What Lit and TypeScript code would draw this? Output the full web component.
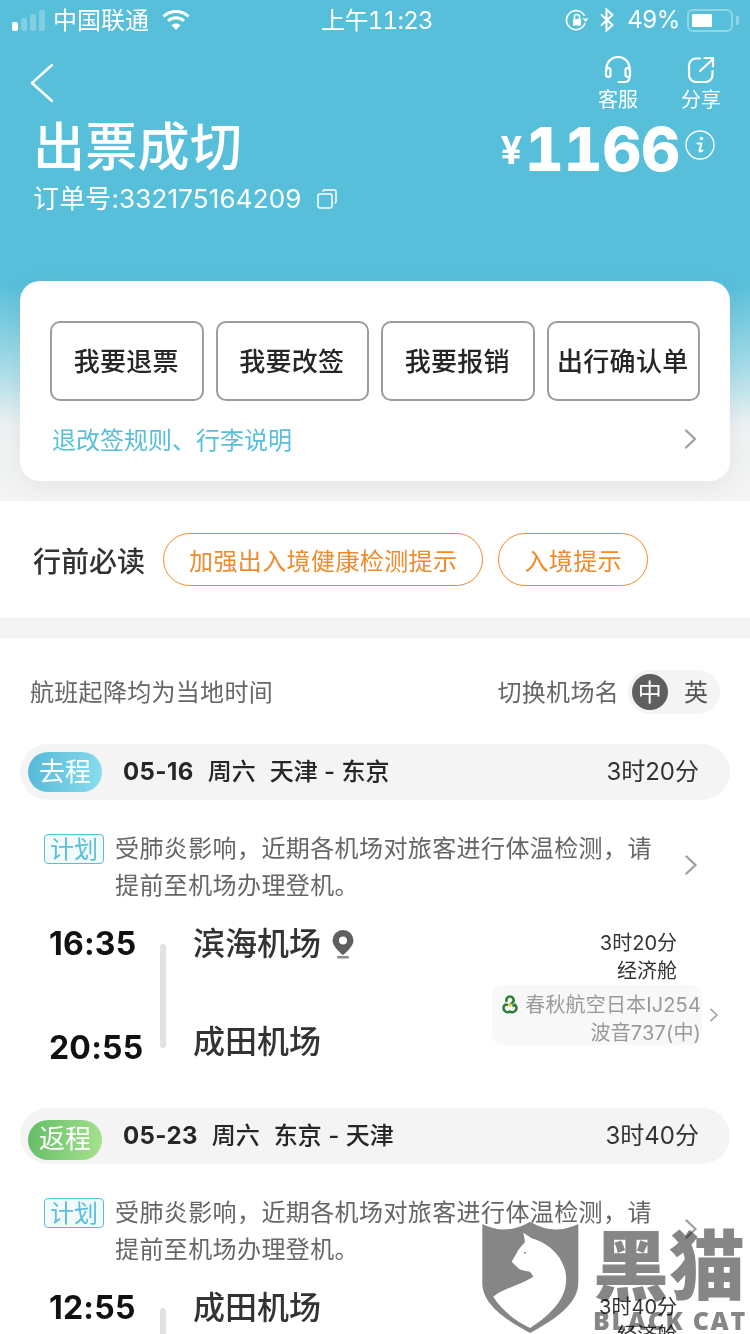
import { LitElement, css, html, svg } from 'lit';
import { customElement } from 'lit/decorators.js';

type Leg = {
  tag: string;
  tone: string;
  date: string;
  week: string;
  route: string;
  duration: string;
  depart: string;
  arrive: string;
  from: string;
  to: string;
  pin: boolean;
};

const LEGS: Leg[] = [
  {
    tag: '去程',
    tone: 'out',
    date: '05-16',
    week: '周六',
    route: '天津 - 东京',
    duration: '3时20分',
    depart: '16:35',
    arrive: '20:55',
    from: '滨海机场',
    to: '成田机场',
    pin: true,
  },
  {
    tag: '返程',
    tone: 'back',
    date: '05-23',
    week: '周六',
    route: '东京 - 天津',
    duration: '3时40分',
    depart: '12:55',
    arrive: '16:35',
    from: '成田机场',
    to: '滨海机场',
    pin: false,
  },
];

const chevron = (w: number, h: number, color: string) => html`<svg
  width=${w}
  height=${h}
  viewBox="0 0 12 20"
  fill="none"
  stroke=${color}
  stroke-width="2.4"
  stroke-linecap="round"
  stroke-linejoin="round"
>
  <path d="M1.5 1.5 10.5 10 1.5 18.5" />
</svg>`;

const airlineLogo = svg`<svg class="logo" width="20" height="20" viewBox="0 0 20 20" fill="none" stroke="#2c7f38" stroke-width="2.600">
  <path d="M6.800 7.800A3.600 3.600 0 1 1 13.200 7.800L11 10" />
  <path d="M10.500 17.200A3.700 3.700 0 1 1 5 10.800H8" />
  <path d="M9.500 17.200A3.700 3.700 0 1 0 15 10.800L12.500 12" />
  <path d="M7.500 10.500 10 9l2.500 1.500L10 13z" fill="#d9c632" stroke="none" />
</svg>`;

@customElement('app-root')
export class AppRoot extends LitElement {
  static styles = css`
    :host {
      display: block;
      position: relative;
      width: 750px;
      height: 1334px;
      overflow: hidden;
      background: #fff;
      color: #333;
      font-family: Inter, 'Noto Sans CJK SC', sans-serif;
    }

    .hero {
      height: 501px;
      box-sizing: border-box;
      background: linear-gradient(#58bfda 0, #58bfda 285px, #a9dde9 370px, #eef1f2 425px, #f4f4f4 501px);
      color: #fff;
    }

    .status {
      display: grid;
      grid-template-columns: 1fr auto 1fr;
      align-items: center;
      height: 36px;
      padding: 0 11px 0 12px;
      font-size: 24px;
    }

    .status svg,
    .battery,
    .nub,
    .signal {
      margin-top: 4px;
    }

    .status-left,
    .status-right {
      display: flex;
      align-items: center;
    }

    .status-right {
      justify-content: flex-end;
    }

    .clock {
      padding: 1px 0 0 3px;
      font-variant-numeric: tabular-nums;
      letter-spacing: -0.7px;
    }

    .percent {
      padding-top: 3px;
      letter-spacing: -0.4px;
    }

    .signal {
      display: flex;
      align-items: flex-end;
      gap: 3px;
      height: 22px;
      margin-right: 8px;
    }

    .signal i {
      width: 6px;
      border-radius: 2px;
      background: rgba(255, 255, 255, 0.25);
    }

    .signal i:first-child {
      background: #fff;
    }

    .wifi {
      margin-left: 13px;
    }

    .bt {
      margin: 4px 13px 0 11px;
    }

    .battery {
      display: flex;
      width: 46px;
      height: 23px;
      box-sizing: border-box;
      margin-left: 7px;
      padding: 3px;
      border: 2px solid rgba(255, 255, 255, 0.35);
      border-radius: 6px;
    }

    .battery b {
      width: 20px;
      background: #fff;
      border-radius: 1px;
    }

    .nub {
      width: 3px;
      height: 9px;
      margin-left: 3px;
      background: rgba(255, 255, 255, 0.35);
      border-radius: 0 2px 2px 0;
    }

    .nav {
      display: flex;
      justify-content: space-between;
      height: 82px;
      box-sizing: border-box;
      padding: 20px 29px 0 30px;
    }

    .back {
      margin-top: 7px;
    }

    .actions {
      display: flex;
      gap: 43px;
    }

    .action {
      display: flex;
      flex-direction: column;
      align-items: center;
      gap: 2px;
      width: 40px;
      font-size: 20px;
      line-height: 28px;
    }

    .summary {
      display: flex;
      justify-content: space-between;
      padding: 0 35px 0 33px;
    }

    h1 {
      margin: 0;
      font-size: 52px;
      font-weight: 500;
      line-height: 60px;
      letter-spacing: 0.3px;
    }

    .order {
      display: flex;
      align-items: center;
      gap: 15px;
      margin-top: 3px;
      font-size: 26px;
      line-height: 36px;
      letter-spacing: 0.15px;
    }

    .price {
      display: flex;
      align-items: flex-start;
      height: 70px;
    }

    .yen {
      margin-top: 7px;
      font-size: 38px;
      font-weight: 700;
      line-height: 50px;
    }

    .amount {
      margin: -4px 5px 0 3px;
      font-size: 60px;
      font-weight: 800;
      font-variant-numeric: tabular-nums;
      line-height: 70px;
    }

    .info {
      margin-top: 12px;
    }

    .card {
      margin: 64px 20px 0;
      height: 200px;
      box-sizing: border-box;
      padding: 40px 30px 0;
      background: #fff;
      border-radius: 20px;
      box-shadow: 0 6px 24px rgba(60, 80, 90, 0.08);
    }

    .buttons {
      display: grid;
      grid-template-columns: repeat(4, 1fr);
      gap: 12px;
    }

    .button {
      display: flex;
      align-items: center;
      justify-content: center;
      height: 80px;
      box-sizing: border-box;
      padding: 0 1px 4px 0;
      border: 2px solid #9c9c9c;
      border-radius: 10px;
      color: #262626;
      font-size: 26px;
      font-weight: 500;
      letter-spacing: 0.3px;
      white-space: nowrap;
    }

    .rules {
      display: flex;
      align-items: center;
      justify-content: space-between;
      height: 36px;
      margin-top: 19px;
      padding: 0 3px 0 2px;
      color: #58bfda;
      font-size: 24px;
    }

    .rules svg {
      margin-top: 2px;
    }

    .must {
      display: flex;
      align-items: center;
      height: 137px;
      box-sizing: border-box;
      padding-left: 33px;
      border-bottom: 20px solid #f4f4f4;
    }

    .must strong {
      margin-right: 18px;
      font-size: 28px;
      font-weight: 500;
      color: #333;
    }

    .chip {
      display: flex;
      align-items: center;
      height: 53px;
      box-sizing: border-box;
      margin-right: 15px;
      padding: 0 25px;
      border: 1px solid #ef8b2c;
      border-radius: 27px;
      color: #ef8b2c;
      font-size: 24px;
      letter-spacing: 0.4px;
    }

    .lang-row {
      display: flex;
      align-items: center;
      justify-content: space-between;
      height: 106px;
      box-sizing: border-box;
      padding: 2px 30px 0;
      color: #666;
      font-size: 24px;
      letter-spacing: 0.3px;
    }

    .lang-row span {
      padding-bottom: 3px;
    }

    .lang {
      display: flex;
      align-items: center;
      gap: 9px;
    }

    .toggle {
      display: flex;
      align-items: center;
      width: 92px;
      height: 44px;
      box-sizing: border-box;
      padding-left: 4px;
      border-radius: 22px;
      background: #f4f4f4;
      color: #555;
    }

    .toggle b {
      display: flex;
      align-items: center;
      justify-content: center;
      width: 36px;
      height: 36px;
      box-sizing: border-box;
      margin-right: 16px;
      padding-bottom: 3px;
      border-radius: 50%;
      background: #5f5f5f;
      color: #fff;
      font-weight: 400;
    }

    .leg-head {
      display: flex;
      align-items: center;
      height: 56px;
      margin: 0 20px;
      padding: 0 31px 0 8px;
      border-radius: 28px;
      background: #f4f4f4;
      color: #262626;
      font-size: 24px;
      font-weight: 500;
    }

    .leg-head span {
      padding-bottom: 6px;
    }

    .leg-head .date {
      padding-bottom: 2px;
      font-weight: 700;
      letter-spacing: 0.4px;
    }

    .leg-head .tag {
      display: flex;
      align-items: center;
      justify-content: center;
      width: 74px;
      height: 40px;
      box-sizing: border-box;
      margin-right: 21px;
      border-radius: 20px;
      color: #fff;
      font-size: 26px;
      font-weight: 400;
    }

    .tag.out {
      background: linear-gradient(100deg, #54b8d6, #8adeee);
    }

    .tag.back {
      background: linear-gradient(100deg, #62bd66, #a8e28f);
    }

    .week {
      margin: 0 14px;
    }

    .duration {
      margin-left: auto;
      color: #333;
      font-weight: 400;
    }

    .notice {
      display: flex;
      align-items: center;
      margin-top: 30px;
      padding: 0 53px 0 44px;
    }

    .plan {
      display: flex;
      flex: none;
      align-items: center;
      justify-content: center;
      align-self: flex-start;
      width: 60px;
      height: 30px;
      box-sizing: border-box;
      margin: 4px 11px 0 0;
      padding-bottom: 3px;
      border: 1px solid #58bfda;
      border-radius: 4px;
      background: #f3fafc;
      color: #58bfda;
      font-size: 24px;
    }

    .notice p {
      flex: 1;
      margin: 0;
      color: #666;
      font-size: 24px;
      line-height: 37px;
      letter-spacing: 0.4px;
    }

    .notice-arrow {
      flex: none;
      margin-left: 12px;
    }

    .flight {
      display: flex;
      height: 184px;
      margin-top: 20px;
      padding: 0 32px 0 49px;
    }

    .times {
      display: flex;
      flex-direction: column;
      gap: 64px;
      width: 111px;
      color: #111;
      font-size: 32px;
      font-weight: 700;
      line-height: 40px;
      letter-spacing: 0.2px;
    }

    .line {
      width: 6px;
      height: 104px;
      margin: 20px 27px 0 0;
      border-radius: 3px;
      background: #e2e2e2;
    }

    .airports {
      display: flex;
      flex: 1;
      flex-direction: column;
      gap: 58px;
      font-size: 32px;
      font-weight: 500;
      line-height: 40px;
    }

    .airport {
      display: flex;
      align-items: center;
      gap: 10px;
    }

    .meta {
      display: flex;
      flex-direction: column;
      align-items: flex-end;
      margin-top: 5px;
      font-size: 20px;
      line-height: 28px;
    }

    .meta span {
      margin-right: 41px;
    }

    .carrier {
      display: flex;
      align-items: center;
      gap: 8px;
    }

    .carrier-box {
      display: flex;
      flex-direction: column;
      align-items: flex-end;
      width: 210px;
      height: 60px;
      box-sizing: border-box;
      padding: 6px 1px 0 0;
      border-radius: 10px;
      background: #f8f8f8;
      color: #999;
      font-size: 20px;
      line-height: 28px;
      letter-spacing: 0.15px;
    }

    .carrier-name {
      display: flex;
      align-items: center;
      gap: 5px;
    }

    .logo {
      margin-top: -2px;
    }

    .watermark {
      position: absolute;
      left: 480px;
      top: 1218px;
      display: flex;
      gap: 13px;
      color: #868686;
      mix-blend-mode: multiply;
      pointer-events: none;
    }

    .wm-text {
      display: flex;
      flex-direction: column;
      width: 156px;
    }

    .wm-cn {
      font-size: 76px;
      font-weight: 900;
      line-height: 96px;
      white-space: nowrap;
    }

    .wm-en {
      margin-top: -7px;
      font-family: 'Open Sans', sans-serif;
      font-size: 25px;
      font-weight: 800;
      line-height: 26px;
      letter-spacing: 1.7px;
      white-space: nowrap;
    }
  `;

  private renderStatus() {
    return html`<div class="status">
      <div class="status-left">
        <div class="signal">
          <i style="height:9px"></i><i style="height:13px"></i><i style="height:17px"></i><i style="height:21px"></i>
        </div>
        中国联通
        <svg class="wifi" width="28" height="22" viewBox="0 0 28 22" fill="none" stroke="#fff" stroke-width="3">
          <path d="M1.5 7.5C8.5 .8 19.5 .8 26.5 7.5" />
          <path d="M6 12c4.600-4.200 11.400-4.200 16 0" />
          <path d="M14 21 9.500 16.200c2.600-2.200 6.400-2.200 9 0z" fill="#fff" stroke="none" />
        </svg>
      </div>
      <div class="clock">上午11:23</div>
      <div class="status-right">
        <svg width="24" height="22" viewBox="0 0 24 22" fill="none" stroke="#fff" stroke-width="1.600">
          <path d="M20 14a9.500 9.500 0 1 1-.5-7" />
          <path d="M17.500 9.500h6L20.500 13z" fill="#fff" stroke="none" />
          <path d="M8 10h8v6.500H8z" fill="#fff" stroke="none" />
          <path d="M9.500 10V8a2.500 2.500 0 0 1 5 0v2" />
        </svg>
        <svg class="bt" width="14" height="24" viewBox="0 0 14 24" fill="none" stroke="#fff" stroke-width="2">
          <path d="M1 6.500 12.500 17 6.500 22.500V1.500L12.500 7 1 17.500" />
        </svg>
        <span class="percent">49%</span>
        <div class="battery"><b></b></div>
        <div class="nub"></div>
      </div>
    </div>`;
  }

  private renderHero() {
    return html`<section class="hero">
      ${this.renderStatus()}
      <div class="nav">
        <svg class="back" width="24" height="40" viewBox="0 0 24 40" fill="none" stroke="#fff" stroke-width="2.400" stroke-linecap="round" stroke-linejoin="round">
          <path d="M22 2 2 20 22 38" />
        </svg>
        <div class="actions">
          <div class="action">
            <svg width="28" height="28" viewBox="0 0 28 28" fill="none" stroke="#fff" stroke-width="2.200" stroke-linecap="round">
              <path d="M2.500 14V12a11.500 11 0 0 1 23 0v2" />
              <rect x="2" y="12" width="4.500" height="9" rx="2.200" />
              <rect x="21.500" y="12" width="4.500" height="9" rx="2.200" />
              <path d="M25.500 21c0 3.500-2 5-5 5h-6" />
            </svg>
            客服
          </div>
          <div class="action">
            <svg width="28" height="28" viewBox="0 0 28 28" fill="none" stroke="#fff" stroke-width="2.200" stroke-linecap="round" stroke-linejoin="round">
              <path d="M13 2.500H9a7 7 0 0 0-7 7V19a7 7 0 0 0 7 7h9.500a7 7 0 0 0 7-7v-4" />
              <path d="M13 15 26 3" />
              <path d="M17.500 2h8.500v8.500" />
            </svg>
            分享
          </div>
        </div>
      </div>
      <div class="summary">
        <div>
          <h1>出票成切</h1>
          <div class="order">
            订单号:332175164209
            <svg width="20" height="20" viewBox="0 0 20 20" fill="none" stroke="#fff" stroke-width="1.500">
              <rect x="1" y="5" width="14" height="14" rx="2" />
              <path d="M5.500 2.500 7 1h10.500a1.500 1.500 0 0 1 1.500 1.500V13l-1.500 1.500" />
            </svg>
          </div>
        </div>
        <div class="price">
          <span class="yen">¥</span>
          <span class="amount">1166</span>
          <svg class="info" width="30" height="30" viewBox="0 0 30 30" fill="none">
            <circle cx="15" cy="15" r="14" stroke="#fff" stroke-width="1.400" />
            <circle cx="16.500" cy="8.500" r="1.800" fill="#fff" />
            <path d="M12.500 13.500h4l-2 7c-.3 1.300.8 1.500 3 0" stroke="#fff" stroke-width="2" stroke-linecap="round" stroke-linejoin="round" />
          </svg>
        </div>
      </div>
      <div class="card">
        <div class="buttons">
          ${['我要退票', '我要改签', '我要报销', '出行确认单'].map(
            (label) => html`<div class="button">${label}</div>`,
          )}
        </div>
        <div class="rules">退改签规则、行李说明 ${chevron(13, 20, '#a0a0a0')}</div>
      </div>
    </section>`;
  }

  private renderLeg(leg: Leg) {
    return html`<div class="leg-head">
        <span class="tag ${leg.tone}">${leg.tag}</span>
        <span class="date">${leg.date}</span>
        <span class="week">${leg.week}</span>
        <span>${leg.route}</span>
        <span class="duration">${leg.duration}</span>
      </div>
      <div class="notice">
        <span class="plan">计划</span>
        <p>受肺炎影响，近期各机场对旅客进行体温检测，请提前至机场办理登机。</p>
        <span class="notice-arrow">${chevron(12, 20, '#a0a0a0')}</span>
      </div>
      <div class="flight">
        <div class="times">
          <div>${leg.depart}</div>
          <div>${leg.arrive}</div>
        </div>
        <div class="line"></div>
        <div class="airports">
          <div class="airport">
            ${leg.from}
            ${leg.pin
              ? html`<svg width="24" height="30" viewBox="0 0 24 30">
                  <path fill-rule="evenodd" fill="#5f5f5f" d="M12 1a10.500 10.500 0 0 0-10.500 10.500C1.500 18 12 26 12 26s10.500-8 10.500-14.500A10.500 10.500 0 0 0 12 1zm0 6.500a4 4 0 1 1 0 8 4 4 0 0 1 0-8z" />
                  <rect x="6" y="27" width="12" height="2.500" rx="1.200" fill="#8a8a8a" />
                </svg>`
              : null}
          </div>
          <div class="airport">${leg.to}</div>
        </div>
        <div class="meta">
          <span>${leg.duration}</span>
          <span>经济舱</span>
          <div class="carrier">
            <div class="carrier-box">
              <div class="carrier-name">${airlineLogo}春秋航空日本IJ254</div>
              <div>波音737(中)</div>
            </div>
            ${chevron(8, 16, '#a0a0a0')}
          </div>
        </div>
      </div>`;
  }

  render() {
    return html`
      ${this.renderHero()}
      <section class="must">
        <strong>行前必读</strong>
        <span class="chip">加强出入境健康检测提示</span>
        <span class="chip">入境提示</span>
      </section>
      <section class="lang-row">
        <span>航班起降均为当地时间</span>
        <div class="lang">
          <span>切换机场名</span>
          <div class="toggle"><b>中</b><span>英</span></div>
        </div>
      </section>
      ${LEGS.map((leg) => this.renderLeg(leg))}
      <div class="watermark">
        <svg width="100" height="118" viewBox="0 0 100 118">
          <path fill="#868686" d="M2.300 6Q26 18 50 3.700 74 18 98.300 6V65C98 88 70 104 50 115 30 104 2.300 88 2.300 65Z" />
          <path fill="#fff" d="M43.300 14.700 51.700 20.300C72 26 88 44 86 64 85 84 66 100 50 110 36 103 22 93 13.300 78.700 24 70 38 68 53.300 58.700 52 56 50 54 50 53.700 44 53 40 52 38.300 50.300L31.700 43.700 38.300 32C41 28 44 26 45 23.700Z" />
          <circle cx="45" cy="34.700" r="1" fill="#868686" />
        </svg>
        <div class="wm-text">
          <div class="wm-cn">黑猫</div>
          <div class="wm-en">BLACK CAT</div>
        </div>
      </div>
    `;
  }
}
